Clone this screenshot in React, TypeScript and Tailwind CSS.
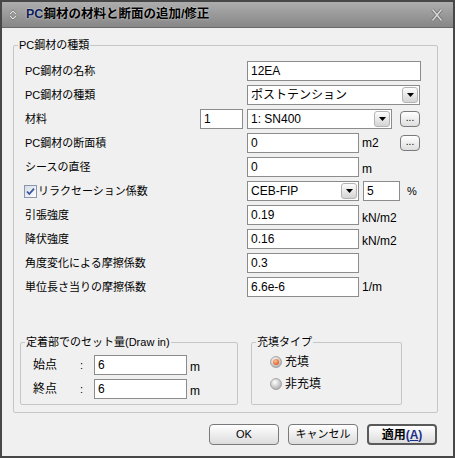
import React from "react";

const Tri = () => (
  <svg width="7" height="4" viewBox="0 0 7 4">
    <path d="M0 0 H7 L3.5 4 Z" fill="#000" />
  </svg>
);

const DropBtn = () => (
  <div className="ml-auto mr-[1px] flex h-[16px] w-[16px] items-center justify-center rounded-[3px] border border-[#b4b4b4] bg-linear-to-b from-[#fdfdfd] to-[#d4d4d4]">
    <Tri />
  </div>
);

const Input = ({ w, v }: { w: string; v: string }) => (
  <div className={`flex h-[20px] items-center border border-[#8c8c8c] bg-white pl-[3px] text-[12px] leading-none ${w}`}>
    {v}
  </div>
);

const Select = ({ w, v }: { w: string; v: string }) => (
  <div className={`flex h-[20px] items-center border border-[#8c8c8c] bg-white pl-[3px] text-[12px] leading-none ${w}`}>
    <span>{v}</span>
    <DropBtn />
  </div>
);

const Dots = () => (
  <div className="flex h-[16px] w-[20px] items-center justify-center rounded-[4px] border border-[#7a7a7a] bg-linear-to-b from-white to-[#dedede] text-[10px] leading-none pb-[3px]">
    ...
  </div>
);

const Label = ({ children, w = "w-[222px]" }: { children: React.ReactNode; w?: string }) => (
  <div className={`${w} text-[11px]`}>{children}</div>
);

const Row = ({ children }: { children: React.ReactNode }) => (
  <div className="flex h-[24px] items-center">{children}</div>
);

const Unit = ({ children, cls = "" }: { children: React.ReactNode; cls?: string }) => (
  <span className={`ml-[3px] text-[12px] ${cls}`}>{children}</span>
);

const Btn = ({ children, def = false }: { children: React.ReactNode; def?: boolean }) => (
  <div
    className={`flex h-[21px] w-[70px] items-center justify-center rounded-[4px] bg-linear-to-b from-white to-[#dcdcdc] text-[11px] ${
      def ? "border-2 border-[#5a5a5a]" : "border border-[#7a7a7a]"
    }`}
  >
    {children}
  </div>
);

const Radio = ({ on }: { on: boolean }) => (
  <svg width="12" height="12" viewBox="0 0 12 12">
    <defs>
      <radialGradient id={on ? "ron" : "roff"} cx="40%" cy="35%" r="70%">
        <stop offset="0%" stopColor="#ffffff" />
        <stop offset="100%" stopColor="#a9a9a9" />
      </radialGradient>
      <radialGradient id="dot" cx="40%" cy="35%" r="70%">
        <stop offset="0%" stopColor="#ffc090" />
        <stop offset="100%" stopColor="#e8541a" />
      </radialGradient>
    </defs>
    <circle cx="6" cy="6" r="5.5" fill={`url(#${on ? "ron" : "roff"})`} stroke="#9a9a9a" strokeWidth="0.8" />
    {on && <circle cx="6" cy="6" r="3" fill="url(#dot)" />}
  </svg>
);

export default function App() {
  return (
    <div className="flex h-[458px] w-[455px] flex-col overflow-hidden border-2 border-[#474747] bg-[#f0f0f0] font-[Liberation_Sans,Noto_Sans_CJK_JP,sans-serif] text-black">
      {/* title bar */}
      <div className="flex h-[26px] shrink-0 items-center border-b border-[#6a6a6a] bg-linear-to-b from-[#adadad] to-[#878787]">
        <svg className="ml-[6px]" width="10" height="12" viewBox="0 0 10 12">
          <polyline points="2,5 5,2 8,5" fill="none" stroke="#5a5a5a" strokeWidth="2" />
          <polyline points="2,7 5,10 8,7" fill="none" stroke="#5a5a5a" strokeWidth="2" />
          <polyline points="2,5 5,2 8,5" fill="none" stroke="#e6e6e6" strokeWidth="1.2" />
          <polyline points="2,7 5,10 8,7" fill="none" stroke="#e6e6e6" strokeWidth="1.2" />
        </svg>
        <div className="ml-[8px] text-[12.5px] font-bold leading-none [text-shadow:0_0_2px_rgba(255,255,255,0.7)]">
          <span className="text-[#0d1d5a]">PC</span>
          <span>鋼材の材料と断面の追加/修正</span>
        </div>
        <svg className="ml-auto mr-[10px]" width="12" height="14" viewBox="0 0 12 14">
          <path d="M1.5 1.5 L10.5 12.5 M10.5 1.5 L1.5 12.5" stroke="#6e6e6e" strokeWidth="3" />
          <path d="M1.5 1.5 L10.5 12.5 M10.5 1.5 L1.5 12.5" stroke="#d6d6d6" strokeWidth="1.6" />
        </svg>
      </div>

      {/* outer group */}
      <fieldset className="ml-[11px] mt-[9px] w-[425px] rounded-[2px] border border-[#c6c6c6]">
        <legend className="ml-[4px] px-[1px] text-[11px] leading-[16px]">PC鋼材の種類</legend>
        <div className="pl-[11px] pt-[6px]">
          <Row>
            <Label>PC鋼材の名称</Label>
            <Input w="w-[174px]" v="12EA" />
          </Row>
          <Row>
            <Label>PC鋼材の種類</Label>
            <Select w="w-[173px]" v="ポストテンション" />
          </Row>
          <Row>
            <Label w="w-[175px]">材料</Label>
            <Input w="w-[43px] mr-[4px]" v="1" />
            <Select w="w-[145px]" v="1: SN400" />
            <div className="ml-[8px]">
              <Dots />
            </div>
          </Row>
          <Row>
            <Label>PC鋼材の断面積</Label>
            <Input w="w-[112px]" v="0" />
            <span className="w-[41px] pl-[3px] text-[12px]">m2</span>
            <Dots />
          </Row>
          <Row>
            <Label>シースの直径</Label>
            <Input w="w-[112px]" v="0" />
            <Unit cls="pt-[4px]">m</Unit>
          </Row>
          <Row>
            <div className="-ml-[1px] flex w-[223px] items-center text-[11px]">
              <svg width="13" height="13" viewBox="0 0 13 13">
                <defs>
                  <linearGradient id="cbg" x1="0" y1="0" x2="1" y2="1">
                    <stop offset="0%" stopColor="#d3dbe6" />
                    <stop offset="100%" stopColor="#ffffff" />
                  </linearGradient>
                </defs>
                <rect x="0.5" y="0.5" width="12" height="12" fill="url(#cbg)" stroke="#8a97aa" />
                <path d="M3 6.5 L5.3 9 L10 3.6" fill="none" stroke="#3b55a0" strokeWidth="1.8" />
              </svg>
              <span className="ml-[1px]">リラクセーション係数</span>
            </div>
            <Select w="w-[112px]" v="CEB-FIP" />
            <Input w="w-[37px] ml-[4px]" v="5" />
            <span className="ml-[7px] text-[11px]">%</span>
          </Row>
          <Row>
            <Label>引張強度</Label>
            <Input w="w-[112px]" v="0.19" />
            <Unit cls="pt-[5px]">kN/m2</Unit>
          </Row>
          <Row>
            <Label>降伏強度</Label>
            <Input w="w-[112px]" v="0.16" />
            <Unit cls="pt-[4px]">kN/m2</Unit>
          </Row>
          <Row>
            <Label>角度変化による摩擦係数</Label>
            <Input w="w-[112px]" v="0.3" />
          </Row>
          <Row>
            <Label>単位長さ当りの摩擦係数</Label>
            <Input w="w-[112px]" v="6.6e-6" />
            <Unit>1/m</Unit>
          </Row>
        </div>

        <div className="mt-[35px] flex pb-[7px] pl-[6px]">
          <fieldset className="w-[218px] rounded-[2px] border border-[#c6c6c6]">
            <legend className="ml-[4px] px-[1px] text-[11px] leading-[16px]">定着部でのセット量(Draw in)</legend>
            <div className="pb-[3px] pl-[12px] pt-[3px]">
              <Row>
                <span className="w-[47px] text-[12px]">始点</span>
                <span className="w-[14px] text-[11px]">:</span>
                <Input w="w-[93px]" v="6" />
                <Unit cls="pt-[4px]">m</Unit>
              </Row>
              <Row>
                <span className="w-[47px] text-[12px]">終点</span>
                <span className="w-[14px] text-[11px]">:</span>
                <Input w="w-[93px]" v="6" />
                <Unit cls="pt-[4px]">m</Unit>
              </Row>
            </div>
          </fieldset>
          <fieldset className="ml-[13px] w-[151px] rounded-[2px] border border-[#c6c6c6]">
            <legend className="ml-[4px] px-[1px] text-[11px] leading-[16px]">充填タイプ</legend>
            <div className="pl-[18px] pt-[1px]">
              <div className="flex h-[22px] items-center gap-[3px] text-[12px]">
                <Radio on />
                <span>充填</span>
              </div>
              <div className="flex h-[22px] items-center gap-[3px] text-[12px]">
                <Radio on={false} />
                <span>非充填</span>
              </div>
            </div>
          </fieldset>
        </div>
      </fieldset>

      {/* buttons */}
      <div className="mt-[11px] flex justify-end gap-[9px] pr-[16px]">
        <Btn>OK</Btn>
        <Btn>キャンセル</Btn>
        <Btn def>
          <span className="text-[12px] font-bold">
            適用<span className="text-[#1a2f8a]">(<span className="underline">A</span>)</span>
          </span>
        </Btn>
      </div>
    </div>
  );
}
